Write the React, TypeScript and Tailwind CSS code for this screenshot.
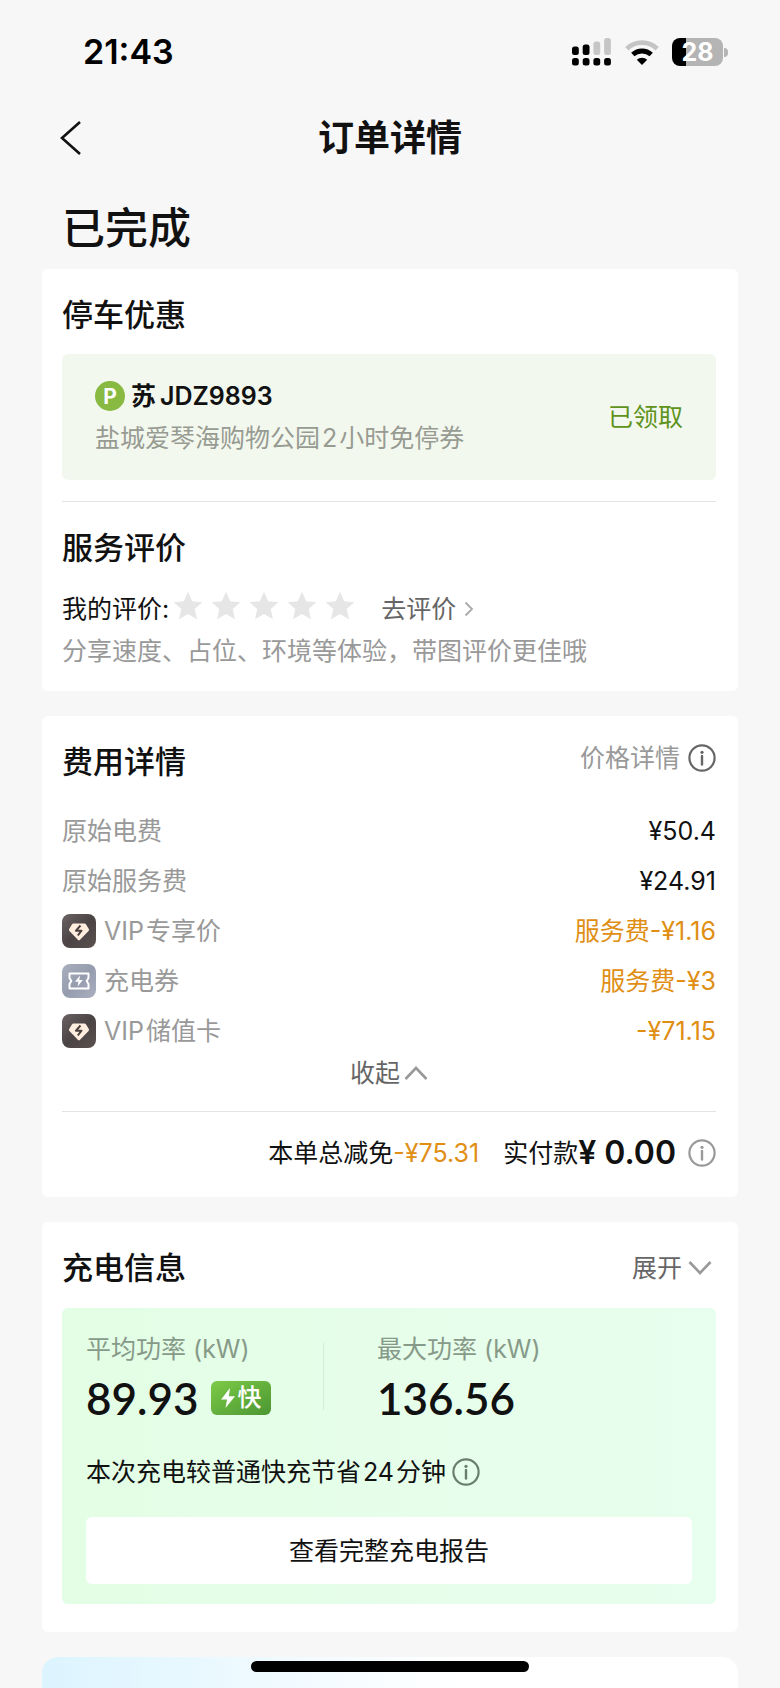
import type { ReactNode } from "react";

function Card({ children, className = "" }: { children: ReactNode; className?: string }) {
  return <section className={`rounded-md bg-white pt-6 pr-[22px] pl-5 ${className}`}>{children}</section>;
}

function Heading({ children }: { children: ReactNode }) {
  return <h2 className="text-[31px] leading-[44px] font-medium text-[#111]">{children}</h2>;
}

function Latin({ children }: { children: ReactNode }) {
  return <span className="mx-0.5">{children}</span>;
}

function InfoIcon({ className }: { className: string }) {
  return (
    <svg viewBox="0 0 28 28" className={`size-7 shrink-0 ${className}`} fill="none" stroke="currentColor" aria-hidden="true">
      <circle cx="14" cy="14" r="12.6" strokeWidth="2.2" />
      <circle cx="14" cy="8.3" r="1.6" fill="currentColor" stroke="none" />
      <path d="M14 12v8.6" strokeWidth="2.4" strokeLinecap="round" />
    </svg>
  );
}

function Chevron({ up = false }: { up?: boolean }) {
  return (
    <svg viewBox="0 0 24 16" className="h-4 w-6" fill="none" stroke="#999" strokeWidth="2.6" aria-hidden="true">
      <path d={up ? "M1.5 14 12 3l10.5 11" : "M1.5 2 12 13l10.5-11"} />
    </svg>
  );
}

function VipIcon() {
  return (
    <svg viewBox="0 0 34 34" className="size-[34px]" aria-hidden="true">
      <defs>
        <linearGradient id="vip" x1="0" y1="0" x2="1" y2="1">
          <stop offset="0" stopColor="#6b6364" />
          <stop offset="0.5" stopColor="#4b4445" />
          <stop offset="1" stopColor="#5a504f" />
        </linearGradient>
      </defs>
      <rect width="34" height="34" rx="8" fill="url(#vip)" />
      <path
        d="M11.5 9.500h11q1 0 1.600.9l2.700 4.600q.6 1-.2 1.900L17.800 26a1.200 1.200 0 0 1-1.700 0l-8.700-9.100q-.8-.9-.2-1.900l2.700-4.600q.6-.9 1.600-.9z"
        fill="#ffeedd"
      />
      <path d="m18.500 11.500-4.500 5.200h5.500l-3.700 4.800" fill="none" stroke="#4a3f3c" strokeWidth="2" strokeLinejoin="round" />
    </svg>
  );
}

function CouponIcon() {
  return (
    <svg viewBox="0 0 34 34" className="size-[34px]" aria-hidden="true">
      <defs>
        <linearGradient id="coupon" x1="0" y1="0" x2="1" y2="1">
          <stop offset="0" stopColor="#a9afbd" />
          <stop offset="0.5" stopColor="#959cad" />
          <stop offset="1" stopColor="#abb0c0" />
        </linearGradient>
      </defs>
      <rect width="34" height="34" rx="8" fill="url(#coupon)" />
      <path d="M7.500 9.500h19v4.500l-1.800 3 1.800 3v4.500h-19V20l1.800-3-1.800-3z" fill="none" stroke="#fff" strokeWidth="2" strokeLinejoin="round" />
      <path d="m18 11.500-5 6.200h3.400l-.8 4.800 5.200-6.500h-3.500z" fill="#fff" />
    </svg>
  );
}

function Star() {
  return (
    <svg viewBox="0 0 28 28" className="size-[30px]" fill="#e6e6e6" aria-hidden="true">
      <path d="m14 .8 3.900 8.700 9.500 1-7.100 6.400 2 9.400L14 21.500l-8.300 4.800 2-9.400L.6 10.500l9.500-1z" />
    </svg>
  );
}

function StatusBar() {
  return (
    <div className="flex h-[104px] items-center justify-between pr-[52px] pl-[83px]">
      <time className="text-[34px] leading-10 font-semibold text-black">21:43</time>
      <div className="flex items-center gap-3">
        <svg viewBox="0 0 40 28" className="h-7 w-10" aria-label="信号">
          <g fill="#000">
            <rect x="0" y="8.500" width="6.800" height="8.500" rx="2.500" />
            <rect x="10.700" y="6.500" width="6.800" height="10.500" rx="2.500" />
            <rect x="0" y="20" width="6.800" height="7.500" rx="2.500" />
            <rect x="10.700" y="20" width="6.800" height="7.500" rx="2.500" />
            <rect x="21.400" y="20" width="6.800" height="7.500" rx="2.500" />
            <rect x="32.100" y="20" width="6.800" height="7.500" rx="2.500" />
          </g>
          <g fill="#c6c6c6">
            <rect x="21.400" y="3.500" width="6.800" height="13.500" rx="2.500" />
            <rect x="32.100" y="0" width="6.800" height="17" rx="2.500" />
          </g>
        </svg>
        <svg viewBox="0 0 36 28" className="h-7 w-9" fill="none" strokeWidth="4.800" aria-label="无线网络">
          <path d="M2.800 10.800a22 22 0 0 1 30.400 0" stroke="#c4c4c4" />
          <path d="M8.800 16.600a13.500 13.500 0 0 1 18.400 0" stroke="#000" />
          <path d="M18 27l-5.200-5.200a7.600 7.600 0 0 1 10.400 0z" fill="#000" />
        </svg>
        <div className="flex items-center gap-px" aria-label="电量 28%">
          <div className="flex h-7 w-[51px] items-center justify-center rounded-lg bg-linear-to-r from-black from-28% to-[#b4b4b4] to-28% text-[25px] leading-7 font-bold text-white">
            28
          </div>
          <div className="h-[9px] w-1 rounded-r-full bg-[#b4b4b4]" />
        </div>
      </div>
    </div>
  );
}

const fees: { label: ReactNode; value: string; icon?: ReactNode; discount?: boolean }[] = [
  { label: "原始电费", value: "¥50.4" },
  { label: "原始服务费", value: "¥24.91" },
  { label: <>VIP<span className="ml-0.5">专享价</span></>, value: "服务费-¥1.16", icon: <VipIcon />, discount: true },
  { label: "充电券", value: "服务费-¥3", icon: <CouponIcon />, discount: true },
  { label: <>VIP<span className="ml-0.5">储值卡</span></>, value: "-¥71.15", icon: <VipIcon />, discount: true },
];

export default function App() {
  return (
    <div className="flex min-h-screen flex-col bg-[#f7f7f7] font-[Inter,'Noto_Sans_CJK_SC',sans-serif] text-[25px] leading-9 text-[#111]">
      <StatusBar />
      <header className="grid h-[68px] grid-cols-[1fr_auto_1fr] items-center px-[58px]">
        <button type="button" aria-label="返回" className="w-fit">
          <svg viewBox="0 0 26 36" className="h-9 w-[26px]" fill="none" stroke="#111" strokeWidth="2.600" aria-hidden="true">
            <path d="M22 2 4 18l18 16" />
          </svg>
        </button>
        <h1 className="text-[36px] leading-[48px] font-semibold">订单详情</h1>
      </header>
      <p className="px-[62px] pt-7 pb-[13px] text-[43px] leading-[56px] font-medium">已完成</p>

      <main className="mx-[42px] flex flex-1 flex-col gap-[25px]">
        <Card className="pb-[22px]">
          <Heading>停车优惠</Heading>
          <div className="mt-[17px] flex h-[126px] items-center justify-between rounded-md bg-[#f3f8ee] px-[33px]">
            <div>
              <div className="flex items-center gap-1.5">
                <span className="flex size-[30px] items-center justify-center rounded-full bg-[#88b941] text-[21px] leading-none font-bold text-white">
                  P
                </span>
                <span className="text-[25px] leading-10 font-semibold">苏<span className="ml-1">JDZ9893</span></span>
              </div>
              <p className="mt-0.5 leading-10 text-[#979b92]">
                盐城爱琴海购物公园<Latin>2</Latin>小时免停券
              </p>
            </div>
            <span className="text-[#5e931c]">已领取</span>
          </div>
          <hr className="mt-[21px] border-[#e3e3e3]" />
          <div className="pt-6">
            <Heading>服务评价</Heading>
          </div>
          <div className="mt-[21px] flex h-9 items-center">
            <span>我的评价:</span>
            <span className="ml-1 flex gap-2 self-start" role="img" aria-label="未评分">
              <Star />
              <Star />
              <Star />
              <Star />
              <Star />
            </span>
            <a href="#review" className="ml-[26px] flex items-center gap-2 text-[#666]">
              去评价
              <svg viewBox="0 0 10 16" className="h-4 w-[10px]" fill="none" stroke="#aaa" strokeWidth="1.800" aria-hidden="true">
                <path d="m1.500 1.500 6.500 6.500-6.500 6.500" />
              </svg>
            </a>
          </div>
          <p className="mt-1.5 text-[#999]">分享速度、占位、环境等体验，带图评价更佳哦</p>
        </Card>

        <Card className="pb-[22px]">
          <div className="flex items-start justify-between">
            <Heading>费用详情</Heading>
            <button type="button" className="flex items-center gap-2 text-[#999]">
              价格详情
              <InfoIcon className="text-[#666]" />
            </button>
          </div>
          <dl className="mt-[22px]">
            {fees.map((fee, i) => (
              <div key={i} className="flex h-[50px] items-center justify-between">
                <dt className="flex items-center gap-2 text-[#999]">
                  {fee.icon}
                  <span>{fee.label}</span>
                </dt>
                <dd className={fee.discount ? "text-[#e08e14]" : "text-[#111]"}>{fee.value}</dd>
              </div>
            ))}
          </dl>
          <button type="button" className="mx-auto flex h-[34px] items-center gap-1 text-[#666]">
            收起
            <Chevron up />
          </button>
          <hr className="mt-[21px] border-[#e3e3e3]" />
          <div className="mt-[19px] flex h-11 items-center justify-end">
            <span>
              本单总减免<span className="text-[#e08e14]">-¥75.31</span>
            </span>
            <span className="ml-6">实付款</span>
            <strong className="text-[32px] leading-11 font-semibold">¥ 0.00</strong>
            <button type="button" aria-label="实付款说明" className="ml-3">
              <InfoIcon className="text-[#999]" />
            </button>
          </div>
        </Card>

        <Card className="pb-7">
          <div className="flex items-center justify-between">
            <Heading>充电信息</Heading>
            <button type="button" className="flex items-center gap-1.5 pr-1 text-[#666]">
              展开
              <Chevron />
            </button>
          </div>
          <div className="mt-[18px] rounded-md bg-linear-to-r from-[#e3fee5] to-[#e8feee] px-6 pt-[23px] pb-5">
            <div className="grid grid-cols-[237px_1fr]">
              <div>
                <p className="text-[#879a89]">平均功率 (kW)</p>
                <div className="mt-[7px] flex h-12 items-center gap-3">
                  <span className="font-[Lato,sans-serif] text-[44px] leading-12 font-semibold">89.93</span>
                  <span className="flex h-[34px] w-[60px] items-center justify-center gap-0.5 rounded-md bg-linear-to-br from-[#7dcb48] to-[#4b9632] text-[24px] leading-8 font-medium text-white">
                    <svg viewBox="0 0 16 22" className="h-[22px] w-4" fill="currentColor" aria-hidden="true">
                      <path d="M10 1 1 12.500h6L5.500 21 15 9.200H8.800z" />
                    </svg>
                    快
                  </span>
                </div>
              </div>
              <div className="flex">
                <div className="my-3 w-px bg-[#d3edd7]" />
                <div className="pl-[53px]">
                  <p className="text-[#879a89]">最大功率 (kW)</p>
                  <p className="mt-[7px] font-[Lato,sans-serif] text-[44px] leading-12 font-semibold">136.56</p>
                </div>
              </div>
            </div>
            <p className="mt-8 flex items-center gap-1.5">
              <span>
                本次充电较普通快充节省<Latin>24</Latin>分钟
              </span>
              <InfoIcon className="text-[#6b7d6e]" />
            </p>
            <button type="button" className="mt-[27px] h-[67px] w-full rounded-md bg-white">
              查看完整充电报告
            </button>
          </div>
        </Card>

        <section className="min-h-7 flex-1 rounded-t-2xl bg-linear-to-r from-[#dcf4ff] to-white to-60%" />
      </main>
      <div className="fixed bottom-4 left-1/2 h-[11px] w-[278px] -translate-x-1/2 rounded-full bg-black" />
    </div>
  );
}
